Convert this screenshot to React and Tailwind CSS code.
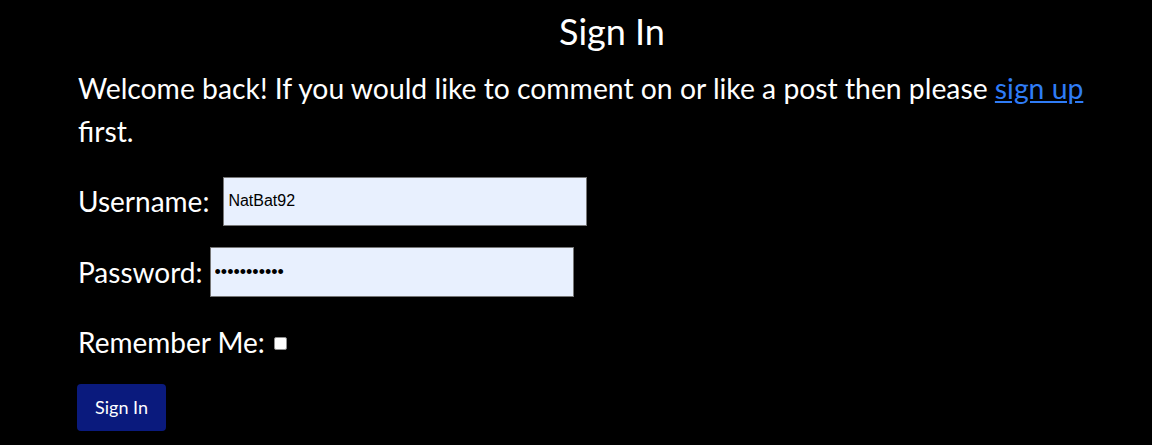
import { useState } from "react";

export default function App() {
  const [username, setUsername] = useState("NatBat92");
  const [password, setPassword] = useState("password123");
  const [remember, setRemember] = useState(false);

  return (
    <div className="min-h-[445px] bg-black text-white font-['Lato',sans-serif]">
      <div className="ml-[78px] w-[1068px] pt-[8px]">
        <h1 className="text-center text-[36px] leading-[46px]">Sign In</h1>

        <p className="text-[28.3px] leading-[43px] mt-[13px]">
          Welcome back! If you would like to comment on or like a post then please{" "}
          <a href="#" className="text-[#2f7cf6] underline">sign up</a>
          <br />
          first.
        </p>

        <form className="mt-[23px] flex flex-col" onSubmit={(e) => e.preventDefault()}>
          <div className="flex items-center gap-[14px] h-[50px]">
            <label className="text-[28px]">Username:</label>
            <input
              value={username}
              onChange={(e) => setUsername(e.target.value)}
              className="w-[364px] h-[49px] bg-[#e8f0fe] border border-[#767676] px-[4px] text-[16px] text-black font-['Liberation_Sans',sans-serif] outline-none"
            />
          </div>

          <div className="flex items-center gap-[7px] h-[50px] mt-[21px]">
            <label className="text-[28px]">Password:</label>
            <input
              type="password"
              value={password}
              onChange={(e) => setPassword(e.target.value)}
              className="w-[364px] h-[50px] bg-[#e8f0fe] border border-[#767676] px-[4px] text-[18px] text-black font-['Liberation_Sans',sans-serif] outline-none"
            />
          </div>

          <div className="flex items-center gap-[9px] mt-[24px] h-[42px]">
            <label className="text-[28px]">Remember Me:</label>
            <input
              type="checkbox"
              checked={remember}
              onChange={(e) => setRemember(e.target.checked)}
              className="appearance-none w-[13px] h-[13px] bg-white border border-[#8f8f8f] rounded-[2px] mt-[2px]"
            />
          </div>

          <div className="mt-[21px]">
            <button className="w-[89px] h-[47px] rounded-[4px] bg-[#0a1a7d] text-white text-[18px] -ml-px">
              Sign In
            </button>
          </div>
        </form>
      </div>
    </div>
  );
}
